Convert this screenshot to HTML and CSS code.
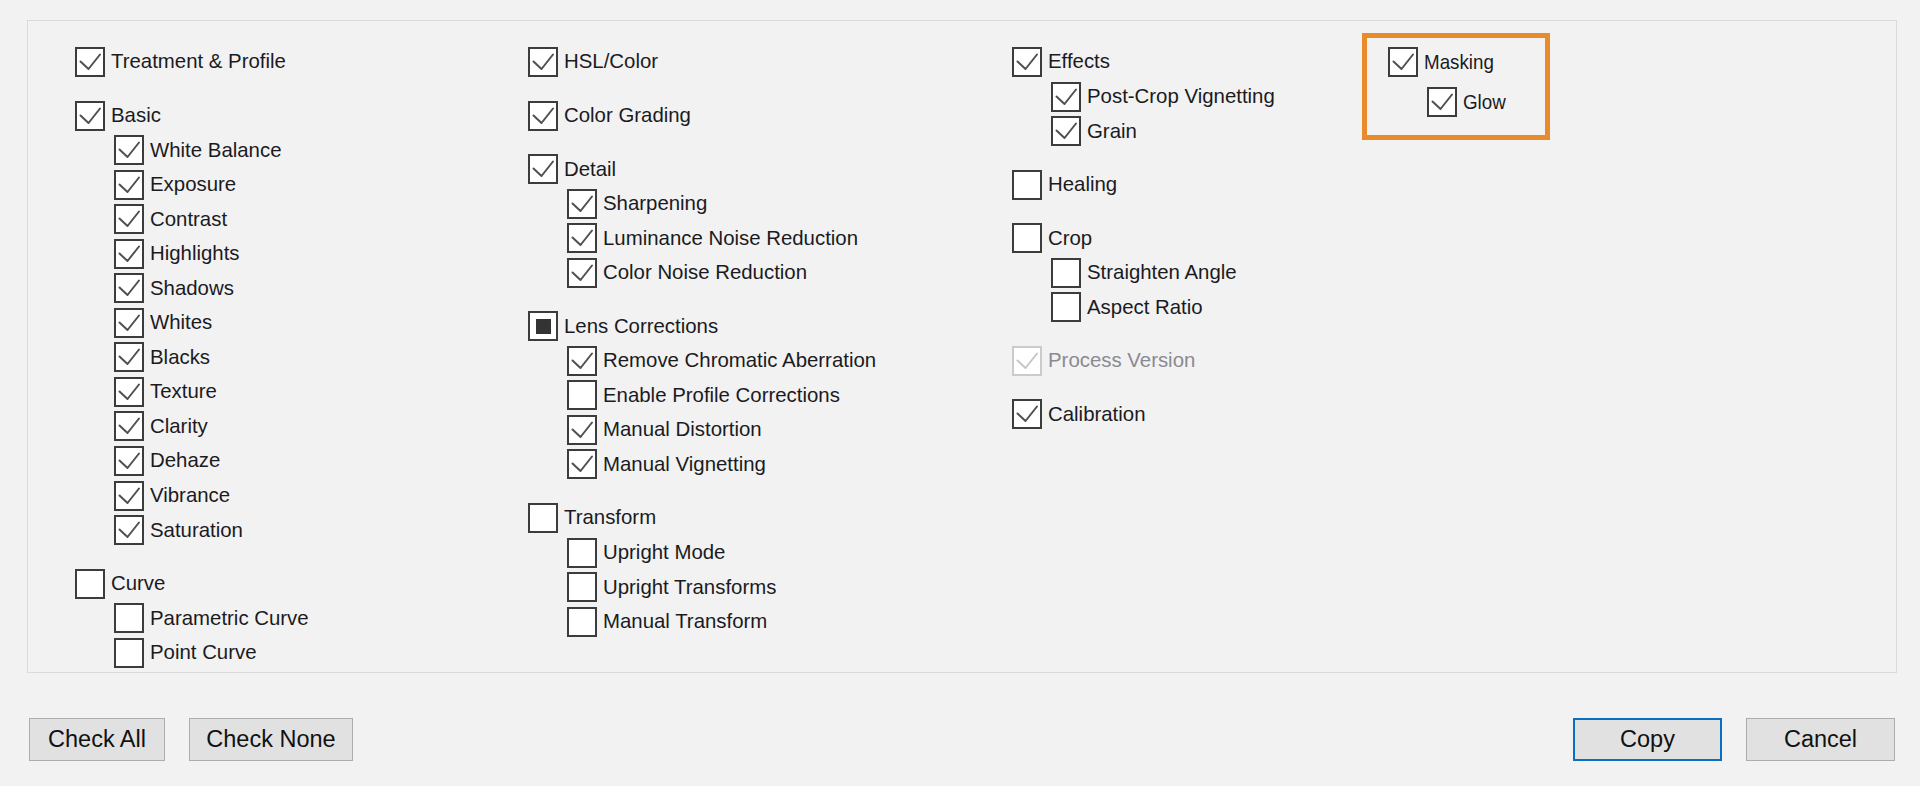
FILE: index.html
```html
<!DOCTYPE html>
<html lang="en">
<head>
<meta charset="utf-8">
<title>Copy Settings</title>
<link rel="stylesheet" href="styles.css">
</head>
<body>
<svg class="defs" width="0" height="0" aria-hidden="true">
  <symbol id="chk" viewBox="2 2 26 26" preserveAspectRatio="none">
    <path d="M5.5 14.5 L13.5 22 L25 7.5" fill="none" stroke-linecap="round" stroke-linejoin="round"/>
  </symbol>
</svg>
<div class="dialog">
  <div class="panel">
    <div class="col">
      <div class="group">
        <div class="row"><span class="box on"><svg><use href="#chk"/></svg></span><span class="label">Treatment &amp; Profile</span></div>
      </div>
      <div class="group">
        <div class="row"><span class="box on"><svg><use href="#chk"/></svg></span><span class="label">Basic</span></div>
        <div class="row sub"><span class="box on"><svg><use href="#chk"/></svg></span><span class="label">White Balance</span></div>
        <div class="row sub"><span class="box on"><svg><use href="#chk"/></svg></span><span class="label">Exposure</span></div>
        <div class="row sub"><span class="box on"><svg><use href="#chk"/></svg></span><span class="label">Contrast</span></div>
        <div class="row sub"><span class="box on"><svg><use href="#chk"/></svg></span><span class="label">Highlights</span></div>
        <div class="row sub"><span class="box on"><svg><use href="#chk"/></svg></span><span class="label">Shadows</span></div>
        <div class="row sub"><span class="box on"><svg><use href="#chk"/></svg></span><span class="label">Whites</span></div>
        <div class="row sub"><span class="box on"><svg><use href="#chk"/></svg></span><span class="label">Blacks</span></div>
        <div class="row sub"><span class="box on"><svg><use href="#chk"/></svg></span><span class="label">Texture</span></div>
        <div class="row sub"><span class="box on"><svg><use href="#chk"/></svg></span><span class="label">Clarity</span></div>
        <div class="row sub"><span class="box on"><svg><use href="#chk"/></svg></span><span class="label">Dehaze</span></div>
        <div class="row sub"><span class="box on"><svg><use href="#chk"/></svg></span><span class="label">Vibrance</span></div>
        <div class="row sub"><span class="box on"><svg><use href="#chk"/></svg></span><span class="label">Saturation</span></div>
      </div>
      <div class="group">
        <div class="row"><span class="box"></span><span class="label">Curve</span></div>
        <div class="row sub"><span class="box"></span><span class="label">Parametric Curve</span></div>
        <div class="row sub"><span class="box"></span><span class="label">Point Curve</span></div>
      </div>
    </div>

    <div class="col">
      <div class="group">
        <div class="row"><span class="box on"><svg><use href="#chk"/></svg></span><span class="label">HSL/Color</span></div>
      </div>
      <div class="group">
        <div class="row"><span class="box on"><svg><use href="#chk"/></svg></span><span class="label">Color Grading</span></div>
      </div>
      <div class="group">
        <div class="row"><span class="box on"><svg><use href="#chk"/></svg></span><span class="label">Detail</span></div>
        <div class="row sub"><span class="box on"><svg><use href="#chk"/></svg></span><span class="label">Sharpening</span></div>
        <div class="row sub"><span class="box on"><svg><use href="#chk"/></svg></span><span class="label">Luminance Noise Reduction</span></div>
        <div class="row sub"><span class="box on"><svg><use href="#chk"/></svg></span><span class="label">Color Noise Reduction</span></div>
      </div>
      <div class="group">
        <div class="row"><span class="box mixed"><span class="fill"></span></span><span class="label">Lens Corrections</span></div>
        <div class="row sub"><span class="box on"><svg><use href="#chk"/></svg></span><span class="label">Remove Chromatic Aberration</span></div>
        <div class="row sub"><span class="box"></span><span class="label">Enable Profile Corrections</span></div>
        <div class="row sub"><span class="box on"><svg><use href="#chk"/></svg></span><span class="label">Manual Distortion</span></div>
        <div class="row sub"><span class="box on"><svg><use href="#chk"/></svg></span><span class="label">Manual Vignetting</span></div>
      </div>
      <div class="group">
        <div class="row"><span class="box"></span><span class="label">Transform</span></div>
        <div class="row sub"><span class="box"></span><span class="label">Upright Mode</span></div>
        <div class="row sub"><span class="box"></span><span class="label">Upright Transforms</span></div>
        <div class="row sub"><span class="box"></span><span class="label">Manual Transform</span></div>
      </div>
    </div>

    <div class="col">
      <div class="group">
        <div class="row"><span class="box on"><svg><use href="#chk"/></svg></span><span class="label">Effects</span></div>
        <div class="row sub"><span class="box on"><svg><use href="#chk"/></svg></span><span class="label">Post-Crop Vignetting</span></div>
        <div class="row sub"><span class="box on"><svg><use href="#chk"/></svg></span><span class="label">Grain</span></div>
      </div>
      <div class="group">
        <div class="row"><span class="box"></span><span class="label">Healing</span></div>
      </div>
      <div class="group">
        <div class="row"><span class="box"></span><span class="label">Crop</span></div>
        <div class="row sub"><span class="box"></span><span class="label">Straighten Angle</span></div>
        <div class="row sub"><span class="box"></span><span class="label">Aspect Ratio</span></div>
      </div>
      <div class="group">
        <div class="row disabled"><span class="box on"><svg><use href="#chk"/></svg></span><span class="label">Process Version</span></div>
      </div>
      <div class="group">
        <div class="row"><span class="box on"><svg><use href="#chk"/></svg></span><span class="label">Calibration</span></div>
      </div>
    </div>

    <div class="col">
      <div class="frame">
        <div class="mrow"><span class="box on"><svg><use href="#chk"/></svg></span><span class="label squeeze">Masking</span></div>
        <div class="mrow msub"><span class="box on"><svg><use href="#chk"/></svg></span><span class="label squeeze">Glow</span></div>
      </div>
    </div>
  </div>

  <div class="btnbar">
    <button class="btn w-all">Check All</button>
    <button class="btn w-none">Check None</button>
    <span class="spacer"></span>
    <button class="btn w-std default">Copy</button>
    <button class="btn w-std">Cancel</button>
  </div>
</div>
</body>
</html>
```

FILE: styles.css
```css
html, body {
  margin: 0;
  padding: 0;
}

body {
  background: #f2f2f2;
  font-family: "Liberation Sans", Arial, sans-serif;
  color: #1b1b1f;
  width: 1920px;
  height: 786px;
  overflow: hidden;
}

.defs {
  position: absolute;
  width: 0;
  height: 0;
}

.dialog {
  box-sizing: border-box;
  height: 786px;
  padding: 20px 23px 0 27px;
}

.panel {
  box-sizing: border-box;
  height: 653px;
  border: 1px solid #dadada;
  background: #f2f2f2;
  padding: 23.7px 0 0 47px;
  display: grid;
  grid-template-columns: 453px 484px 350px auto;
  align-items: start;
}

.group + .group {
  margin-top: 19px;
}

.row {
  display: flex;
  align-items: center;
  height: 34.55px;
  font-size: 20.4px;
  white-space: nowrap;
}

.row.sub {
  padding-left: 39px;
}

.box {
  flex: none;
  box-sizing: border-box;
  width: 30px;
  height: 30px;
  border: 2px solid #3c3c3c;
  background: #ffffff;
  margin-right: 6px;
  display: flex;
  align-items: center;
  justify-content: center;
}

.box svg {
  width: 100%;
  height: 100%;
  display: block;
  stroke: #505050;
  stroke-width: 2;
}

.box.mixed .fill {
  width: 15px;
  height: 15px;
  background: #333333;
}

.disabled .box {
  border-color: #cbcbcb;
}

.disabled .box svg {
  stroke: #c6c6c6;
}

.disabled .label {
  color: #8a8a92;
}

/* Masking overlay */
.frame {
  box-sizing: border-box;
  width: 188px;
  height: 107px;
  margin-top: -11.7px;
  border: 5px solid #e98a2c;
  padding: 9px 0 0 21px;
}

.mrow {
  display: flex;
  align-items: center;
  height: 30px;
  font-size: 20.4px;
  white-space: nowrap;
}

.mrow.msub {
  margin-top: 10px;
  padding-left: 39px;
}

.squeeze {
  display: inline-block;
  transform: scaleX(0.92);
  transform-origin: left center;
}

/* Buttons */
.btnbar {
  display: flex;
  gap: 24px;
  margin-top: 45px;
  padding: 0 2px;
}

.spacer {
  flex: 1;
}

.btn {
  box-sizing: border-box;
  height: 43px;
  border: 1px solid #adadad;
  background: #e1e1e1;
  color: #111111;
  font-family: "Liberation Sans", Arial, sans-serif;
  font-size: 23.5px;
  padding: 0;
  margin: 0;
}

.btn.default {
  border: 2px solid #0a6fc2;
}

.w-all {
  width: 136px;
}

.w-none {
  width: 164px;
}

.w-std {
  width: 149px;
}
```
